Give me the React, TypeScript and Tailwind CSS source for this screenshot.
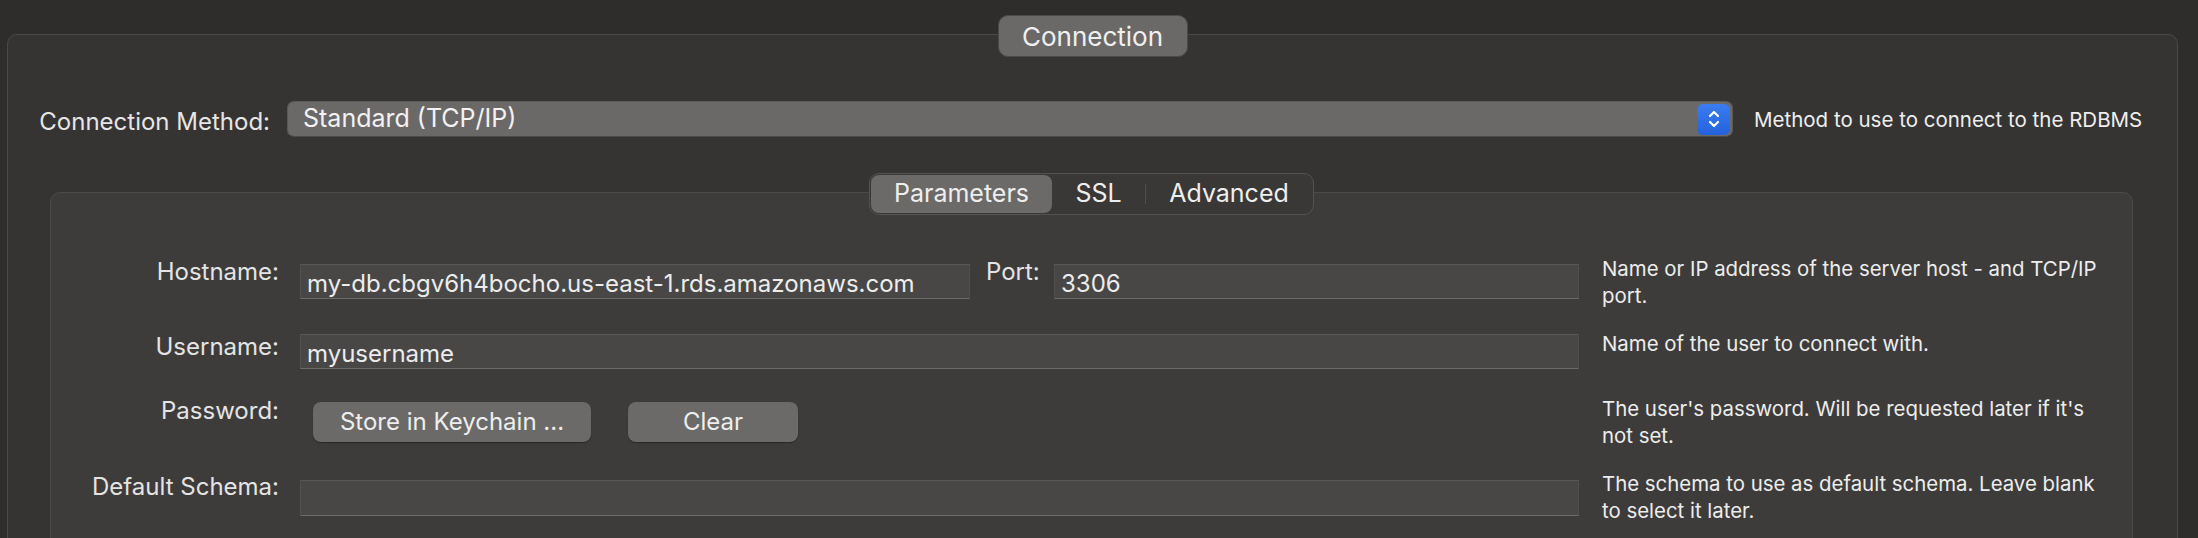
import React from "react";

const font = { fontFamily: "Inter, 'Noto Sans', sans-serif" };

const Input = ({ value, className }: { value?: string; className: string }) => (
   <div
      className={`h-[35px] bg-[#484746] border border-[#504f4e] border-t-[#595857] border-b-[#6c6b6a] pl-[6px] pt-[5px] text-[24px] leading-[28px] text-[#ececec] ${className}`}
   >
      {value}
   </div>
);

const Desc = ({ lines, className }: { lines: string[]; className: string }) => (
   <div className={`ml-[23px] text-[20.4px] leading-[27px] text-[#ededed] ${className}`}>
      {lines.map((l, i) => (
         <div key={i}>{l}</div>
      ))}
   </div>
);

const Label = ({ text, className }: { text: string; className: string }) => (
   <div className={`w-[228px] shrink-0 text-right text-[24px] leading-[20px] text-[#e4e4e4] ${className}`}>{text}</div>
);

const Stepper = () => (
   <div className="w-[33px] h-[31px] rounded-[6px] bg-gradient-to-b from-[#3b7cf0] to-[#2462dc] flex items-center justify-center">
      <svg width="14" height="22" viewBox="0 0 14 22" fill="none" stroke="#ffffff" strokeWidth="2.2" strokeLinecap="round" strokeLinejoin="round">
         <path d="M3 8 L7 4 L11 8" />
         <path d="M3 14 L7 18 L11 14" />
      </svg>
   </div>
);

export default function App() {
   return (
      <div className="w-[2198px] h-[538px] overflow-hidden bg-[#2f2d2c] pt-[15px] pl-[7px]" style={font}>
         <div className="w-[2171px] flex flex-col items-center">
            <div className="relative z-10 h-[42px] w-[190px] rounded-[10px] bg-[#6a6968] border border-[#4b4a49] flex items-center justify-center text-[26px] text-[#f0f0f0]">
               Connection
            </div>
         </div>

         <div className="-mt-[23px] w-[2171px] h-[600px] rounded-[10px] border border-[#4a4948] bg-[#353433] pt-[66px]">
            <div className="flex items-center h-[36px]">
               <div className="w-[262px] shrink-0 text-right text-[24px] text-[#e6e6e6] pt-[5px]">Connection Method:</div>
               <div className="ml-[17px] w-[1446px] h-[36px] rounded-[7px] bg-[#6a6968] border border-[#5a5958] border-b-[#4a4948] flex items-center justify-between pl-[15px] pr-[2px]">
                  <span className="text-[25px] text-[#f2f2f2]">Standard (TCP/IP)</span>
                  <Stepper />
               </div>
               <div className="ml-[21px] text-[20.5px] text-[#eeeeee] pt-[3px]">Method to use to connect to the RDBMS</div>
            </div>

            <div className="mt-[36px] ml-[42px] w-[2083px] flex flex-col items-center">
               <div className="relative z-10 h-[42px] w-[445px] rounded-[10px] bg-[#393837] border border-[#535251] flex items-center p-[1px] text-[25px] text-[#eeeeee]">
                  <div className="h-full w-[181px] rounded-[8px] bg-[#6b6a69] flex items-center justify-center">Parameters</div>
                  <div className="w-[93px] text-center">SSL</div>
                  <div className="w-[1px] h-[20px] bg-[#4f4e4d]"></div>
                  <div className="flex-1 text-center">Advanced</div>
               </div>

               <div className="-mt-[23px] w-[2083px] h-[400px] rounded-[10px] border border-[#4b4a49] bg-[#3d3c3b] pt-[71px]">
                  <div className="flex items-start h-[70px]">
                     <Label text="Hostname:" className="-mt-[2px]" />
                     <Input value="my-db.cbgv6h4bocho.us-east-1.rds.amazonaws.com" className="ml-[21px] w-[670px]" />
                     <div className="ml-[16px] w-[68px] text-[24px] leading-[20px] text-[#e4e4e4] -mt-[2px]">Port:</div>
                     <Input value="3306" className="w-[525px]" />
                     <Desc lines={["Name or IP address of the server host - and TCP/IP", "port."]} className="-mt-[9px]" />
                  </div>

                  <div className="flex items-start h-[68px]">
                     <Label text="Username:" className="mt-[3px]" />
                     <Input value="myusername" className="ml-[21px] w-[1279px]" />
                     <Desc lines={["Name of the user to connect with."]} className="-mt-[4px]" />
                  </div>

                  <div className="flex items-start h-[78px]">
                     <Label text="Password:" className="-mt-[1px]" />
                     <div className="ml-[21px] w-[1279px] flex gap-[37px] pl-[13px]">
                        <button className="w-[278px] h-[40px] rounded-[8px] bg-[#6b6a69] shadow-[0_1px_1px_rgba(0,0,0,0.35)] text-[24px] text-[#eeeeee]">
                           Store in Keychain ...
                        </button>
                        <button className="w-[170px] h-[40px] rounded-[8px] bg-[#6b6a69] shadow-[0_1px_1px_rgba(0,0,0,0.35)] text-[24px] text-[#eeeeee]">
                           Clear
                        </button>
                     </div>
                     <Desc lines={["The user's password. Will be requested later if it's", "not set."]} className="-mt-[7px]" />
                  </div>

                  <div className="flex items-start h-[70px]">
                     <Label text="Default Schema:" className="-mt-[3px]" />
                     <Input className="ml-[21px] w-[1279px] h-[36px]" />
                     <Desc lines={["The schema to use as default schema. Leave blank", "to select it later."]} className="-mt-[10px]" />
                  </div>
               </div>
            </div>
         </div>
      </div>
   );
}
